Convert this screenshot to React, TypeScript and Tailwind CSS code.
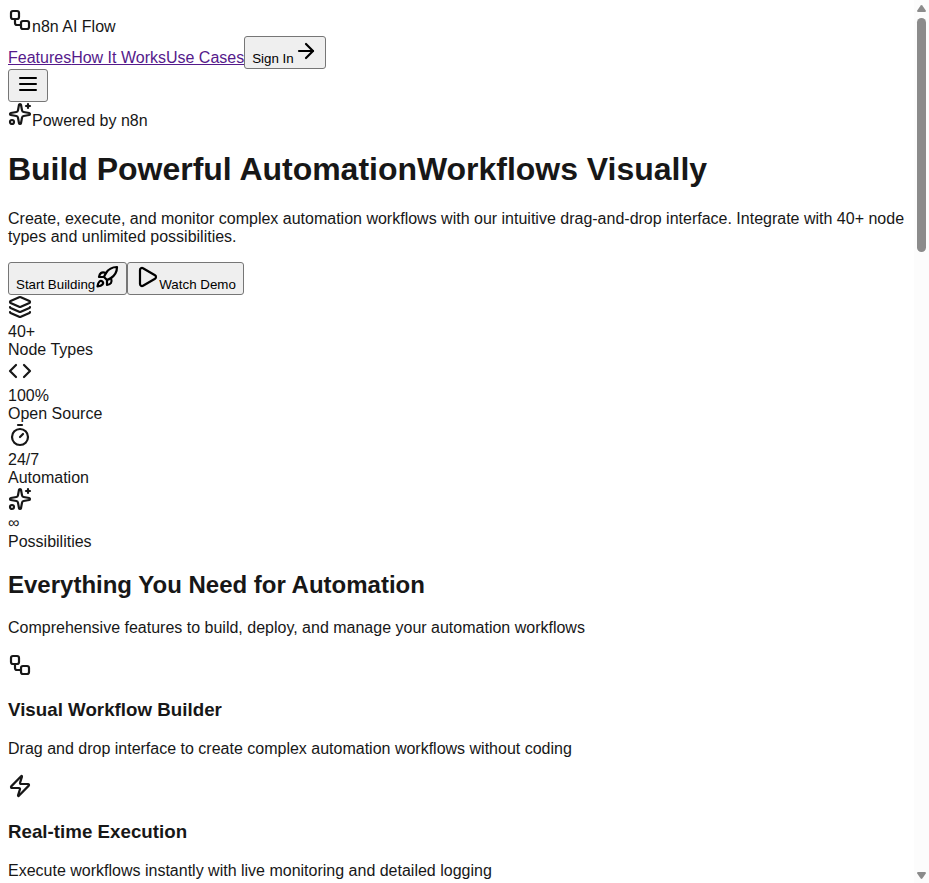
import type { ReactNode } from 'react';
import { ArrowRight, Code, Layers, Play, Sparkles, Timer, Workflow, Zap } from 'lucide-react';

const icon = 'inline align-baseline';

function MenuIcon() {
  return (
    <svg className="inline size-6 align-baseline" viewBox="0 0 24 24" fill="none" stroke="currentColor" strokeWidth="2" strokeLinecap="round">
      <path d="M4 6h16" />
      <path d="M4 12h16" />
      <path d="M4 18h16" />
    </svg>
  );
}

function RocketIcon() {
  return (
    <svg className="inline size-6 align-baseline" viewBox="0 0 24 24" fill="none" stroke="currentColor" strokeWidth="2.2" strokeLinecap="round" strokeLinejoin="round">
      <path d="M4.5 16.5c-1.5 1.26-2 5-2 5s3.74-.5 5-2c.71-.84.7-2.13-.09-2.91a2.18 2.18 0 0 0-2.91-.09z" />
      <path d="m12 15-3-3a22 22 0 0 1 2-3.95A12.88 12.88 0 0 1 22 2c0 2.72-.78 7.5-6 11a22.35 22.35 0 0 1-4 2z" />
      <path d="M9 12H4s.55-3.03 2-4c1.62-1.08 5 0 5 0" />
      <path d="M12 15v5s3.03-.55 4-2c1.08-1.62 0-5 0-5" />
    </svg>
  );
}

function Button({ children }: { children: ReactNode }) {
  return (
    <button className="rounded-[3px] border border-[#767676] bg-[#efefef] px-[7px] py-[2px] align-baseline text-[13.3333px] leading-[normal] text-black">
      {children}
    </button>
  );
}

const stats = [
  { Icon: Layers, value: '40+', label: 'Node Types' },
  { Icon: Code, value: '100%', label: 'Open Source' },
  { Icon: Timer, value: '24/7', label: 'Automation' },
  { Icon: Sparkles, value: '∞', label: 'Possibilities' },
];

const features = [
  {
    Icon: Workflow,
    title: 'Visual Workflow Builder',
    text: 'Drag and drop interface to create complex automation workflows without coding',
  },
  {
    Icon: Zap,
    title: 'Real-time Execution',
    text: 'Execute workflows instantly with live monitoring and detailed logging',
  },
];

function Scrollbar() {
  return (
    <div className="flex w-[15px] shrink-0 flex-col items-center bg-[#fcfcfc]">
      <svg className="mt-[5px] block h-[7px] w-[9px] shrink-0" viewBox="0 0 9 7" fill="#8b8b8b">
        <path d="M3.7.4Q4.5-.4 5.3.4L8.8 5.4Q9.2 7 8 7H1Q-.2 7 .2 5.4Z" />
      </svg>
      <div className="mt-[6px] h-[234px] w-[9px] shrink-0 rounded-full bg-[#8b8b8b]" />
      <svg className="mt-auto mb-[4px] block h-[7px] w-[9px] shrink-0" viewBox="0 0 9 7" fill="#8b8b8b">
        <path d="M3.7 6.6Q4.5 7.4 5.3 6.6L8.8 1.6Q9.2 0 8 0H1Q-.2 0 .2 1.6Z" />
      </svg>
    </div>
  );
}

export default function App() {
  return (
    <div className="flex h-[883px] w-full overflow-hidden bg-white font-['Liberation_Sans',Arial,sans-serif] text-[16px] leading-[normal] text-[#171717]">
      <main className="min-w-0 flex-1 p-[8px]">
        <nav>
          <div>
            <Workflow className={icon} strokeWidth={2.2} />
            <span>n8n AI Flow</span>
          </div>
          <div className="text-[#551a8b]">
            <a href="#features" className="underline">Features</a>
            <a href="#how" className="underline">How It Works</a>
            <a href="#cases" className="underline">Use Cases</a>
            <Button>
              Sign In
              <ArrowRight className={icon} strokeWidth={2.2} />
            </Button>
          </div>
          <Button>
            <MenuIcon />
          </Button>
        </nav>

        <section>
          <div>
            <Sparkles className={icon} strokeWidth={2.2} />
            <span>Powered by n8n</span>
          </div>
          <h1 className="my-[21.44px] text-[32px] leading-[normal] font-bold tracking-[-0.02px]">
            Build Powerful Automation<span>Workflows Visually</span>
          </h1>
          <p className="my-[16px]">
            Create, execute, and monitor complex automation workflows with our intuitive drag-and-drop interface.
            Integrate with 40+ node types and unlimited possibilities.
          </p>
          <div>
            <Button>
              Start Building
              <RocketIcon />
            </Button>
            <Button>
              <Play className={icon} strokeWidth={2.2} />
              Watch Demo
            </Button>
          </div>
          {stats.map(({ Icon, value, label }) => (
            <div key={label}>
              <Icon className={icon} strokeWidth={2.2} />
              <div className={value === '∞' ? '-translate-y-px' : ''}>{value}</div>
              <div>{label}</div>
            </div>
          ))}
        </section>

        <section>
          <h2 className="my-[19.92px] text-[24px] leading-[normal] font-bold">Everything You Need for Automation</h2>
          <p className="my-[16px]">Comprehensive features to build, deploy, and manage your automation workflows</p>
          {features.map(({ Icon, title, text }) => (
            <div key={title}>
              <Icon className={icon} strokeWidth={2.2} />
              <h3 className="my-[18.72px] text-[18.72px] leading-[normal] font-bold tracking-[0.02px]">{title}</h3>
              <p className="my-[16px]">{text}</p>
            </div>
          ))}
        </section>
      </main>
      <Scrollbar />
    </div>
  );
}
